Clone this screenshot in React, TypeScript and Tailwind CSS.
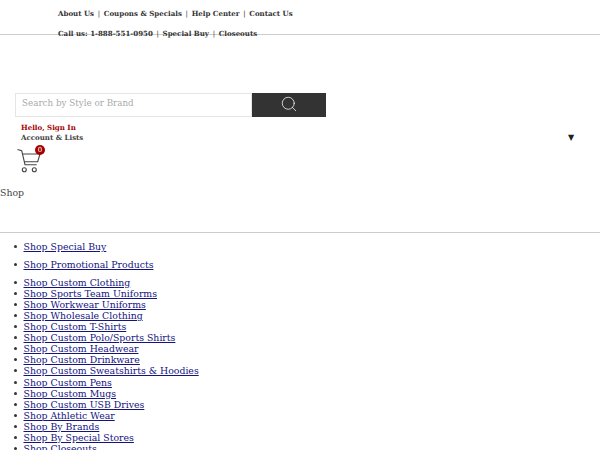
import { Search } from "lucide-react";

const topLinks = ["About Us", "Coupons & Specials", "Help Center", "Contact Us"];
const subLinks = ["Call us: 1-888-551-0950", "Special Buy", "Closeouts"];
const shopLinks = [
  "Shop Custom Clothing",
  "Shop Sports Team Uniforms",
  "Shop Workwear Uniforms",
  "Shop Wholesale Clothing",
  "Shop Custom T-Shirts",
  "Shop Custom Polo/Sports Shirts",
  "Shop Custom Headwear",
  "Shop Custom Drinkware",
  "Shop Custom Sweatshirts & Hoodies",
  "Shop Custom Pens",
  "Shop Custom Mugs",
  "Shop Custom USB Drives",
  "Shop Athletic Wear",
  "Shop By Brands",
  "Shop By Special Stores",
  "Shop Closeouts",
];

function LinkRow({ items }: { items: string[] }) {
  return (
    <div className="flex h-5 items-center text-[7.05px] font-bold text-[#333]">
      {items.map((item, i) => (
        <span key={item} className="flex items-center whitespace-pre">
          {i > 0 && <span className="px-[3.7px] font-normal">|</span>}
          {item}
        </span>
      ))}
    </div>
  );
}

function Cart() {
  return (
    <div className="relative ml-[17px] mt-[2px] h-[28px] w-[30px]">
      <svg width="24" height="25" viewBox="0 0 24 25" fill="none" stroke="#444" strokeWidth="1.1" className="absolute left-0 top-[3px]">
        <path d="M0.5 1.5 L4.7 2.7 L8 16.7 H19.7" />
        <path d="M5.7 6 H23 L20.7 13.7 H7" />
        <circle cx="7.3" cy="21.7" r="2" />
        <circle cx="17.3" cy="21.7" r="2" />
      </svg>
      <span className="absolute left-[18px] top-0 flex h-[10px] w-[10px] items-center justify-center rounded-full bg-[#a50000] text-[7px] text-white">
        0
      </span>
    </div>
  );
}

function ShopItem({ label, className }: { label: string; className?: string }) {
  return (
    <li className={`relative underline before:absolute before:left-[-10px] before:top-[4px] before:h-[3px] before:w-[3px] before:rounded-full before:bg-[#333] ${className ?? ""}`}>
      {label}
    </li>
  );
}

export default function App() {
  return (
    <div className="h-[450px] overflow-hidden bg-white font-['DejaVu_Serif',serif] text-[#333]">
      <div className="h-[35px] border-b border-[#ccc] pl-[58px] pt-[4px]">
        <LinkRow items={topLinks} />
        <LinkRow items={subLinks} />
      </div>

      <div className="ml-[15px] mt-[58px] flex h-[24px] w-[311px]">
        <div className="flex flex-1 items-center border border-[#e5e5e5] pb-[3px] pl-[6px] text-[8.75px] text-[#aaa]">
          Search by Style or Brand
        </div>
        <div className="flex w-[74px] items-center justify-center bg-[#333] pb-[2px]">
          <Search size={18} strokeWidth={1} className="text-white" />
        </div>
      </div>

      <div className="relative ml-[21px] mt-[6px] text-[7.05px] font-bold leading-[10px]">
        <div className="text-[#a50000]">Hello, Sign In</div>
        <div className="text-[#444]">Account &amp; Lists</div>
        <span className="absolute left-[547px] top-[10px] text-[8px] font-normal leading-[10px] text-[#222]">▼</span>
      </div>

      <Cart />

      <div className="mt-[12px] h-[47px] text-[9.35px] leading-[16px] text-[#444]">Shop</div>

      <div className="border-t border-[#ccc]">
        <ul className="list-none pl-[23.5px] pt-[8px] text-[9.35px] leading-[11.1px] text-[#14147f]">
          <ShopItem label="Shop Special Buy" className="pb-[7px]" />
          <ShopItem label="Shop Promotional Products" className="pb-[6.5px]" />
          {shopLinks.map((link) => (
            <ShopItem key={link} label={link} />
          ))}
        </ul>
      </div>
    </div>
  );
}
